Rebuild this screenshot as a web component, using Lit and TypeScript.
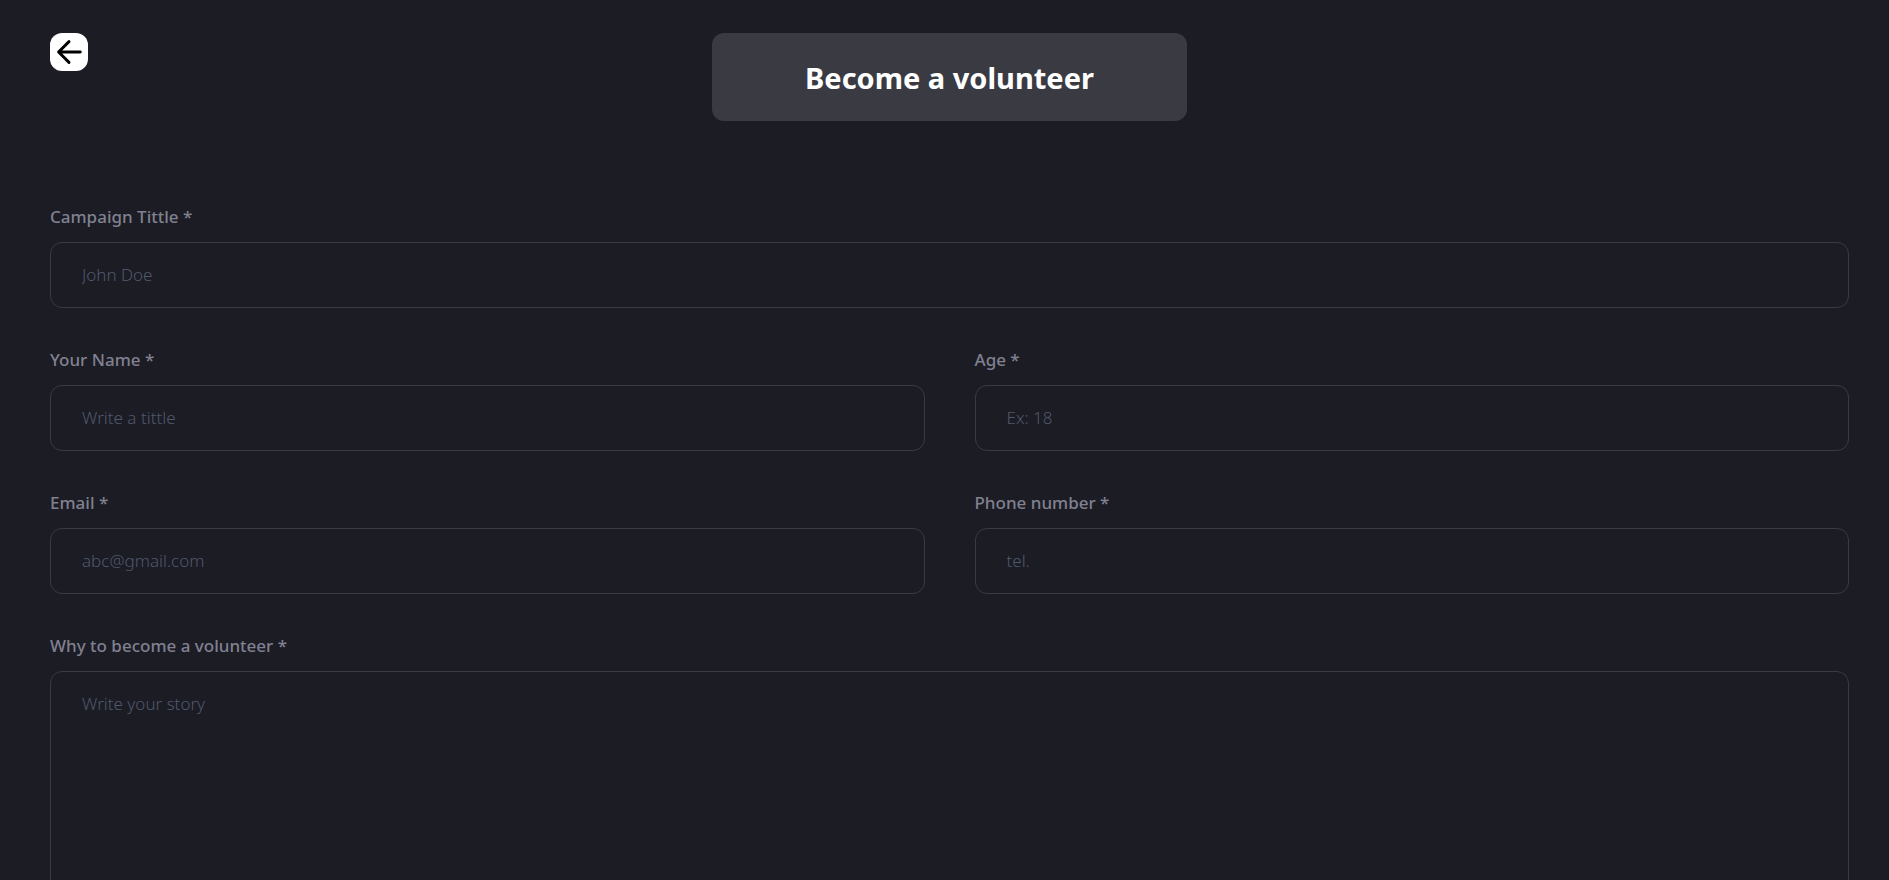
import { LitElement, html, css } from "lit";
import { customElement } from "lit/decorators.js";

interface Field {
  id: string;
  label: string;
  placeholder: string;
  type: string;
  wide?: boolean;
}

const FIELDS: Field[] = [
  { id: "title", label: "Campaign Tittle *", placeholder: "John Doe", type: "text", wide: true },
  { id: "name", label: "Your Name *", placeholder: "Write a tittle", type: "text" },
  { id: "age", label: "Age *", placeholder: "Ex: 18", type: "text" },
  { id: "email", label: "Email *", placeholder: "abc@gmail.com", type: "email" },
  { id: "phone", label: "Phone number *", placeholder: "tel.", type: "tel" },
];

@customElement("app-root")
export class AppRoot extends LitElement {
  static styles = css`
    :host {
      display: block;
      box-sizing: border-box;
      height: 100vh;
      overflow: hidden;
      padding: 33px 40px 0 50px;
      background: #1c1c24;
      color: #808191;
      font-family: "Noto Sans", "Open Sans", sans-serif;
    }
    .header {
      display: grid;
      grid-template-columns: 1fr auto 1fr;
      align-items: start;
    }
    .back {
      display: flex;
      align-items: center;
      justify-content: center;
      width: 38px;
      height: 38px;
      padding: 0;
      border: 0;
      border-radius: 12px;
      background: #fff;
      color: #000;
      cursor: pointer;
    }
    .banner {
      box-sizing: border-box;
      width: 475px;
      max-width: 100%;
      padding: 25px 16px 23px;
      border-radius: 12px;
      background: #3a3a43;
      text-align: center;
    }
    .title {
      margin: 0;
      font-size: 29px;
      font-weight: 700;
      line-height: 40px;
      color: #fff;
    }
    .form {
      display: grid;
      grid-template-columns: 1fr 1fr;
      gap: 41px 50px;
      margin-top: 85px;
    }
    .field {
      display: flex;
      flex-direction: column;
      gap: 14px;
      min-width: 0;
    }
    .wide {
      grid-column: 1 / -1;
    }
    .label {
      font-size: 17px;
      font-weight: 500;
      line-height: 22px;
    }
    .control {
      box-sizing: border-box;
      width: 100%;
      padding: 20px 31px;
      border: 1px solid #3a3a43;
      border-radius: 12px;
      outline: none;
      background: transparent;
      color: #fff;
      font-family: inherit;
      font-size: 17px;
      font-weight: 300;
      line-height: 24px;
      resize: none;
    }
    .control::placeholder {
      color: #4f586c;
      opacity: 1;
    }
  `;

  render() {
    return html`
      <header class="header">
        <button class="back" type="button" aria-label="Go back">
          <svg width="26" height="26" viewBox="0 0 26 26" fill="none" stroke="currentColor" stroke-width="2.9" stroke-linecap="round" stroke-linejoin="round" aria-hidden="true">
            <path d="M24.3 13H2.6M13 2.6L2.6 13L13 23.4" />
          </svg>
        </button>
        <div class="banner"><h1 class="title">Become a volunteer</h1></div>
      </header>
      <form class="form">
        ${FIELDS.map(
          (f) => html`
            <div class="field ${f.wide ? "wide" : ""}">
              <label class="label" for=${f.id}>${f.label}</label>
              <input class="control" id=${f.id} type=${f.type} placeholder=${f.placeholder} required />
            </div>
          `
        )}
        <div class="field wide">
          <label class="label" for="story">Why to become a volunteer *</label>
          <textarea class="control" id="story" rows="10" placeholder="Write your story" required></textarea>
        </div>
      </form>
    `;
  }
}
